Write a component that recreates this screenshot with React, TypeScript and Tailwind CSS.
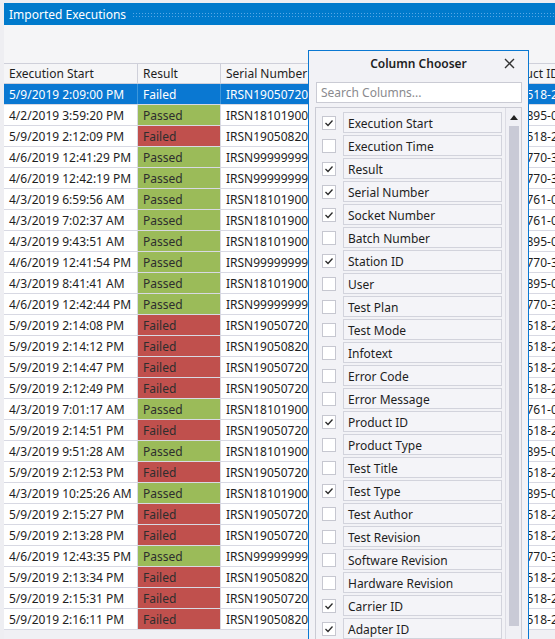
import React from 'react';

interface Execution {
  start: string;
  passed: boolean;
  serial: string;
  product: string;
}

const rows: Execution[] = [
  { start: '5/9/2019 2:09:00 PM', passed: false, serial: 'IRSN1905072000145', product: '518-2' },
  { start: '4/2/2019 3:59:20 PM', passed: true, serial: 'IRSN1810190001212', product: '895-0' },
  { start: '5/9/2019 2:12:09 PM', passed: false, serial: 'IRSN1905082000311', product: '518-2' },
  { start: '4/6/2019 12:41:29 PM', passed: true, serial: 'IRSN9999999999999', product: '770-3' },
  { start: '4/6/2019 12:42:19 PM', passed: true, serial: 'IRSN9999999999999', product: '770-3' },
  { start: '4/3/2019 6:59:56 AM', passed: true, serial: 'IRSN1810190001212', product: '761-0' },
  { start: '4/3/2019 7:02:37 AM', passed: true, serial: 'IRSN1810190001212', product: '761-0' },
  { start: '4/3/2019 9:43:51 AM', passed: true, serial: 'IRSN1810190001212', product: '895-0' },
  { start: '4/6/2019 12:41:54 PM', passed: true, serial: 'IRSN9999999999999', product: '770-3' },
  { start: '4/3/2019 8:41:41 AM', passed: true, serial: 'IRSN1810190001212', product: '895-0' },
  { start: '4/6/2019 12:42:44 PM', passed: true, serial: 'IRSN9999999999999', product: '770-3' },
  { start: '5/9/2019 2:14:08 PM', passed: false, serial: 'IRSN1905072000145', product: '518-2' },
  { start: '5/9/2019 2:14:12 PM', passed: false, serial: 'IRSN1905082000311', product: '518-2' },
  { start: '5/9/2019 2:14:47 PM', passed: false, serial: 'IRSN1905072000145', product: '518-2' },
  { start: '5/9/2019 2:12:49 PM', passed: false, serial: 'IRSN1905072000145', product: '518-2' },
  { start: '4/3/2019 7:01:17 AM', passed: true, serial: 'IRSN1810190001212', product: '761-0' },
  { start: '5/9/2019 2:14:51 PM', passed: false, serial: 'IRSN1905072000145', product: '518-2' },
  { start: '4/3/2019 9:51:28 AM', passed: true, serial: 'IRSN1810190001212', product: '895-0' },
  { start: '5/9/2019 2:12:53 PM', passed: false, serial: 'IRSN1905072000145', product: '518-2' },
  { start: '4/3/2019 10:25:26 AM', passed: true, serial: 'IRSN1810190001212', product: '895-0' },
  { start: '5/9/2019 2:15:27 PM', passed: false, serial: 'IRSN1905072000145', product: '518-2' },
  { start: '5/9/2019 2:13:28 PM', passed: false, serial: 'IRSN1905072000145', product: '518-2' },
  { start: '4/6/2019 12:43:35 PM', passed: true, serial: 'IRSN9999999999999', product: '770-3' },
  { start: '5/9/2019 2:13:34 PM', passed: false, serial: 'IRSN1905082000311', product: '518-2' },
  { start: '5/9/2019 2:15:31 PM', passed: false, serial: 'IRSN1905072000145', product: '518-2' },
  { start: '5/9/2019 2:16:11 PM', passed: false, serial: 'IRSN1905082000311', product: '518-2' },
];

const columns: [string, boolean][] = [
  ['Execution Start', true],
  ['Execution Time', false],
  ['Result', true],
  ['Serial Number', true],
  ['Socket Number', true],
  ['Batch Number', false],
  ['Station ID', true],
  ['User', false],
  ['Test Plan', false],
  ['Test Mode', false],
  ['Infotext', false],
  ['Error Code', false],
  ['Error Message', false],
  ['Product ID', true],
  ['Product Type', false],
  ['Test Title', false],
  ['Test Type', true],
  ['Test Author', false],
  ['Test Revision', false],
  ['Software Revision', false],
  ['Hardware Revision', false],
  ['Carrier ID', true],
  ['Adapter ID', true],
];

function CheckBox({ checked }: { checked: boolean }) {
  return (
    <div className="w-[14px] h-[14px] shrink-0 bg-white border border-[#c6c7d0] flex items-center justify-center">
      {checked && (
        <svg width="10" height="10" viewBox="0 0 10 10">
          <polyline points="1.5,5 4,7.5 8.5,2.5" fill="none" stroke="#2b2b2b" strokeWidth="1.3" />
        </svg>
      )}
    </div>
  );
}

function ColumnChooser() {
  return (
    <div className="absolute left-[308px] top-[50px] w-[221px] h-[600px] border border-[#0a78d2] bg-[#f2f2f6] px-[6px]">
      <div className="h-[26px] flex items-center justify-center relative">
        <span className="font-semibold text-[#1e1e1e]">Column Chooser</span>
        <svg className="absolute right-[7px] top-[7px]" width="11" height="11" viewBox="0 0 11 11">
          <path d="M1 1 L10 10 M10 1 L1 10" stroke="#333" strokeWidth="1.4" />
        </svg>
      </div>
      <div className="mt-[5px] ml-[1px] h-[21px] bg-white border border-[#cacbd4] flex items-center px-[4px] pt-[1px] text-[#8a8a8e]">
        Search Columns...
      </div>
      <div className="mt-[4px] border border-[#cacbd4] flex h-[560px]">
        <div className="flex-1 pl-[6px] pr-[3px] pt-[4px] flex flex-col gap-[2px]">
          {columns.map(([name, checked]) => (
            <div key={name} className="flex items-center gap-[7px]">
              <CheckBox checked={checked} />
              <div className="flex-1 h-[21px] border border-[#d2d3dc] bg-[#f4f4f8] flex items-center px-[4px] pt-[2px] text-[#1e1e1e]">
                {name}
              </div>
            </div>
          ))}
        </div>
        <div className="w-[16px] shrink-0 border-l border-[#dcdce4] bg-[#f0f0f5] flex flex-col items-center">
          <div className="h-[18px] flex items-center justify-center">
            <svg width="8" height="5" viewBox="0 0 8 5">
              <polygon points="0,5 4,0 8,5" fill="#222" />
            </svg>
          </div>
          <div className="w-[10px] h-[500px] bg-[#c9cad6]" />
        </div>
      </div>
    </div>
  );
}

export default function App() {
  return (
    <div className="w-[555px] h-[639px] overflow-hidden relative bg-[#eeeef2] pl-[4px] pt-[3px] text-[12px] leading-none font-['Segoe_UI','Noto_Sans',sans-serif] flex flex-col">
      <div className="h-[22px] shrink-0 bg-[#007acc] flex items-center pl-[5px] pt-[1px] text-white">
        <span className="whitespace-nowrap">Imported Executions</span>
        <div className="flex-1 ml-[6px] h-[5px] bg-[radial-gradient(circle,#5aa7e6_0.9px,transparent_1px)] bg-[length:3px_3px]" />
      </div>
      <div className="h-[38px] shrink-0 bg-[#f5f5f7]" />
      <div className="flex flex-col min-w-[700px] whitespace-nowrap">
        <div className="h-[21px] flex bg-[#f5f5f7] border-y border-[#cfd0da] text-[#1e1e1e]">
          <div className="w-[134px] shrink-0 border-r border-[#cfd0da] px-[5px] pt-[1px] flex items-center">Execution Start</div>
          <div className="w-[83px] shrink-0 border-r border-[#cfd0da] px-[5px] pt-[1px] flex items-center">Result</div>
          <div className="w-[150px] shrink-0 border-r border-[#cfd0da] px-[5px] pt-[1px] flex items-center">Serial Number</div>
          <div className="w-[123px] shrink-0 border-r border-[#cfd0da] px-[5px] pt-[1px] flex items-center">Socket Number</div>
          <div className="w-[140px] shrink-0 px-[5px] pt-[1px] flex items-center">Product ID</div>
        </div>
        {rows.map((r, i) => {
          const sel = i === 0;
          const line = sel ? 'border-[#3d97dc]' : 'border-[#d8d9e3]';
          const result = sel ? '' : r.passed ? 'bg-[#9bbb59]' : 'bg-[#c0504d]';
          return (
            <div
              key={i}
              className={`h-[21px] flex border-b border-[#d8d9e3] ${sel ? 'bg-[#0a78d2] text-white' : 'bg-white text-[#1e1e1e]'}`}
            >
              <div className={`w-[134px] shrink-0 border-r ${line} px-[5px] pt-[2px] flex items-center`}>{r.start}</div>
              <div className={`w-[83px] shrink-0 border-r ${line} px-[5px] pt-[2px] flex items-center ${result} ${sel ? '' : 'text-[#2e2e2e]'}`}>
                {r.passed ? 'Passed' : 'Failed'}
              </div>
              <div className={`w-[150px] shrink-0 border-r ${line} px-[5px] pt-[2px] flex items-center overflow-hidden`}>{r.serial}</div>
              <div className={`w-[123px] shrink-0 border-r ${line} px-[5px] pt-[2px] flex items-center`}>{r.passed ? '2' : '1'}</div>
              <div className="w-[140px] shrink-0 px-[5px] pt-[2px] flex items-center">{'1000' + r.product + '001'}</div>
            </div>
          );
        })}
      </div>
      <div className="flex-1 bg-[#f0f0f4]" />
      <ColumnChooser />
    </div>
  );
}
